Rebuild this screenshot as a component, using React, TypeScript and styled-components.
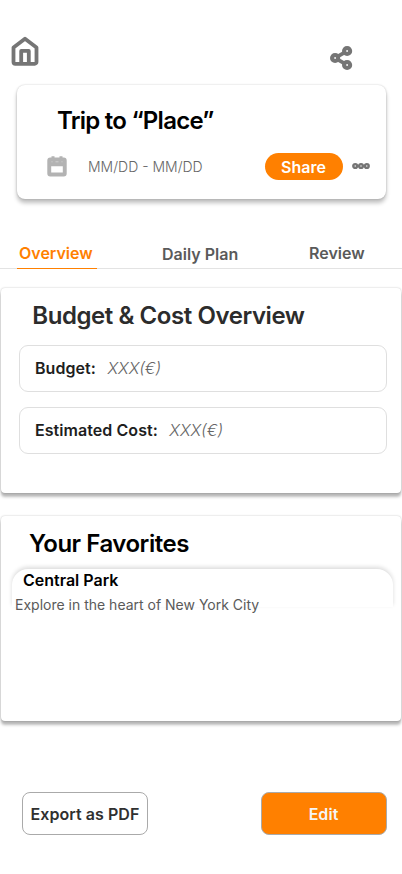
import React from "react";
import styled, { createGlobalStyle } from "styled-components";

const GlobalStyle = createGlobalStyle`
  *, *::before, *::after { box-sizing: border-box; }
  body { margin: 0; background: #fff; font-family: Inter, sans-serif; }
  h1, h2, h3, p { margin: 0; }
  button { font-family: inherit; padding: 0; margin: 0; cursor: pointer; }
  svg { display: block; flex: none; }
`;

const Screen = styled.main`
  display: flex;
  flex-direction: column;
  width: 402px;
  height: 874px;
  overflow: hidden;
  background: #fff;
`;

const TopBar = styled.header`
  display: flex;
  justify-content: space-between;
  align-items: flex-start;
  height: 85px;
  padding: 36px 49px 0 10px;
`;

const IconButton = styled.button<{ $drop?: number }>`
  border: 0;
  background: none;
  color: #757575;
  margin-top: ${(p) => p.$drop ?? 0}px;
`;

const TripCard = styled.section`
  height: 114px;
  margin: 0 16.5px 0 16.5px;
  padding: 20px 15px 0 30px;
  border-radius: 8px;
  background: #fff;
  box-shadow: 0 0 2px rgba(0, 0, 0, 0.22), 0 4px 4px rgba(0, 0, 0, 0.25);
`;

const TripTitle = styled.h1`
  padding-left: 10.5px;
  font-size: 24px;
  line-height: 32px;
  font-weight: 600;
  letter-spacing: -0.75px;
  color: #000;
`;

const TripMeta = styled.div`
  display: flex;
  align-items: center;
  height: 28px;
  margin-top: 15px;
`;

const Dates = styled.span`
  flex: 1;
  padding: 2px 0 0 21.5px;
  font-size: 14px;
  line-height: 20px;
  font-weight: 300;
  color: #666;
`;

const SharePill = styled.button`
  width: 78px;
  height: 27px;
  margin-right: 9px;
  padding-top: 1px;
  border: 0;
  border-radius: 14px;
  background: #ff8000;
  color: #fff;
  font-size: 16px;
  line-height: 20px;
  font-weight: 600;
`;

const Tabs = styled.nav`
  display: flex;
  height: 34px;
  margin-top: 36px;
  padding-left: 17px;
  border-bottom: 1px solid #e3e3e3;
`;

const Tab = styled.button<{ $active?: boolean; $width: number; $gap?: number; $drop?: number }>`
  width: ${(p) => p.$width}px;
  height: 34px;
  margin-left: ${(p) => p.$gap ?? 0}px;
  padding: ${(p) => 8 + (p.$drop ?? 0)}px 0 0 2px;
  border: 0;
  border-bottom: 1px solid ${(p) => (p.$active ? "#ff8000" : "transparent")};
  background: none;
  display: flex;
  align-items: flex-start;
  white-space: nowrap;
  font-size: 16px;
  line-height: 20px;
  font-weight: 600;
  color: ${(p) => (p.$active ? "#ff8000" : "#5a5a5a")};
`;

const Panel = styled.section<{ $gap: number }>`
  height: 205px;
  margin: ${(p) => p.$gap}px 1px 0;
  border-radius: 4px;
  background: #fff;
  box-shadow: 0 0 2px rgba(0, 0, 0, 0.26), 0 4px 3px rgba(0, 0, 0, 0.25), 0 3px 2px rgba(0, 0, 0, 0.04);
`;

const PanelTitle = styled.h2<{ $left: number; $color: string; $spacing: number }>`
  padding: 12px 0 0 ${(p) => p.$left}px;
  font-size: 24px;
  line-height: 32px;
  font-weight: 600;
  letter-spacing: ${(p) => p.$spacing}px;
  color: ${(p) => p.$color};
`;

const Fields = styled.div`
  display: flex;
  flex-direction: column;
  gap: 15px;
  margin: 12.5px 14.500px 0 17.500px;
`;

const Field = styled.div`
  display: flex;
  align-items: center;
  gap: 11.5px;
  height: 47px;
  padding: 0 0 1px 15.5px;
  border: 1px solid #dfdfdf;
  border-radius: 9px;
  font-size: 16px;
  line-height: 20px;
`;

const FieldLabel = styled.span`
  font-weight: 600;
  letter-spacing: 0.06px;
  color: #1e1e1e;
`;

const FieldValue = styled.span`
  font-style: italic;
  font-weight: 300;
  color: #666;
`;

const FavoriteCard = styled.article`
  height: 38px;
  margin: 9px 8px 0 11px;
  padding: 1px 0 0 3px;
  border-radius: 16px 16px 0 0;
  background: #fff;
  box-shadow: 0 -2px 4px rgba(0, 0, 0, 0.14);
`;

const FavoriteName = styled.h3`
  padding-left: 8px;
  font-size: 16px;
  line-height: 20px;
  font-weight: 600;
  color: #000;
`;

const FavoriteText = styled.p`
  margin-top: 5px;
  font-size: 14px;
  line-height: 20px;
  color: #5a5a5a;
`;

const Actions = styled.footer`
  display: flex;
  justify-content: space-between;
  margin-top: 71px;
  padding: 0 15px 0 22px;
`;

const ActionButton = styled.button<{ $primary?: boolean }>`
  width: 126px;
  height: 43px;
  border: 1px solid #aaa;
  border-radius: 8px;
  background: ${(p) => (p.$primary ? "#ff8000" : "#fff")};
  color: ${(p) => (p.$primary ? "#f5f5f5" : "#303030")};
  padding-right: ${(p) => (p.$primary ? 1 : 0)}px;
  font-size: 16px;
  line-height: 20px;
  font-weight: 600;
  letter-spacing: 0.06px;
  white-space: nowrap;
`;

const HomeIcon = () => (
  <svg width="30" height="30" viewBox="0 0 30 30" fill="none" stroke="currentColor" strokeWidth="3.8" strokeLinejoin="round">
    <path d="M3.5 11.5 15 2.800l11.500 8.700v14.500a1.800 1.800 0 0 1-1.800 1.800H5.300a1.800 1.800 0 0 1-1.800-1.800z" />
    <path d="M11.200 27V14.900h7.600V27" />
  </svg>
);

const ShareIcon = () => (
  <svg width="23" height="26" viewBox="0 0 23 26" fill="none" stroke="currentColor" strokeWidth="4.2">
    <circle cx="5.1" cy="13" r="3" />
    <circle cx="17.1" cy="6" r="3" />
    <circle cx="17.1" cy="20" r="3" />
    <path d="m7.800 11.400 6.600-3.800M7.800 14.600l6.600 3.800" strokeWidth="3.8" />
  </svg>
);

const CalendarIcon = () => (
  <svg width="20" height="22" viewBox="0 0 20 22" fill="none">
    <path
      fill="#b3b3b3"
      fillRule="evenodd"
      d="M4.500 1.200h3v1.200h5V1.200h3v1.200h1.200A3 3 0 0 1 19.700 5.400V18.600a3 3 0 0 1-3 3H3.300a3 3 0 0 1-3-3V5.400a3 3 0 0 1 3-3H4.500zM4.200 11.200V17.500h11.600V11.200z"
    />
    <path d="M4.500 6.800h1M8.500 6.800h3M14.500 6.800h1" stroke="#d0d0d0" />
  </svg>
);

const MoreIcon = () => (
  <svg width="19" height="8" viewBox="0 0 19 8" fill="none" stroke="currentColor" strokeWidth="2.4">
    <circle cx="3.200" cy="4" r="1.900" />
    <circle cx="9" cy="4" r="1.900" />
    <circle cx="14.800" cy="4" r="1.900" />
  </svg>
);

export default function App() {
  return (
    <>
      <GlobalStyle />
      <Screen>
        <TopBar>
          <IconButton aria-label="Home"><HomeIcon /></IconButton>
          <IconButton aria-label="Share trip" $drop={9}><ShareIcon /></IconButton>
        </TopBar>

        <TripCard>
          <TripTitle>Trip to “Place”</TripTitle>
          <TripMeta>
            <CalendarIcon />
            <Dates>MM/DD - MM/DD</Dates>
            <SharePill>Share</SharePill>
            <IconButton aria-label="More"><MoreIcon /></IconButton>
          </TripMeta>
        </TripCard>

        <Tabs>
          <Tab $active $width={80}>Overview</Tab>
          <Tab $width={80} $gap={63} $drop={1}>Daily Plan</Tab>
          <Tab $width={60} $gap={67}>Review</Tab>
        </Tabs>

        <Panel $gap={19}>
          <PanelTitle $left={31.3} $spacing={-0.43} $color="#2c2c2c">Budget &amp; Cost Overview</PanelTitle>
          <Fields>
            <Field><FieldLabel>Budget:</FieldLabel><FieldValue>XXX(€)</FieldValue></Field>
            <Field><FieldLabel>Estimated Cost:</FieldLabel><FieldValue>XXX(€)</FieldValue></Field>
          </Fields>
        </Panel>

        <Panel $gap={23}>
          <PanelTitle $left={28} $spacing={-0.48} $color="#000">Your Favorites</PanelTitle>
          <FavoriteCard>
            <FavoriteName>Central Park</FavoriteName>
            <FavoriteText>Explore in the heart of New York City</FavoriteText>
          </FavoriteCard>
        </Panel>

        <Actions>
          <ActionButton>Export as PDF</ActionButton>
          <ActionButton $primary>Edit</ActionButton>
        </Actions>
      </Screen>
    </>
  );
}
